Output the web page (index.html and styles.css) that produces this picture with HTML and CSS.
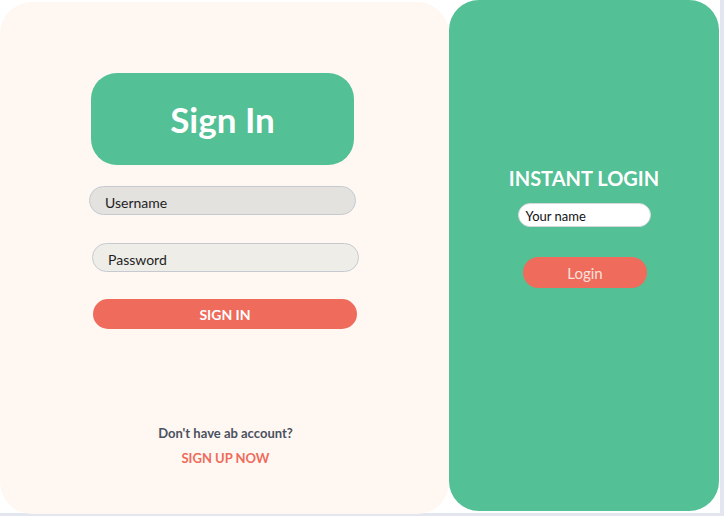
FILE: index.html
```html
<!DOCTYPE html>
<html>
<head>
<meta charset="utf-8">
<link rel="stylesheet" href="styles.css">
</head>
<body>
<div class="page">
  <section class="signin-panel">
    <div class="signin-title">Sign In</div>
    <div class="field field-user">Username</div>
    <div class="field field-pass">Password</div>
    <button class="signin-btn">SIGN IN</button>
    <div class="footer">
      <p class="no-account">Don't have ab account?</p>
      <a class="signup-link">SIGN UP NOW</a>
    </div>
  </section>
  <section class="instant-panel">
    <h2 class="instant-title">INSTANT LOGIN</h2>
    <div class="name-field">Your name</div>
    <button class="login-btn">Login</button>
  </section>
</div>
</body>
</html>
```
FILE: styles.css
```css
html, body {
  margin: 0;
  padding: 0;
}
body {
  background: #e3e6ee;
  font-family: Lato, "Open Sans", sans-serif;
  width: 724px;
  height: 516px;
  overflow: hidden;
}
.page {
  width: 720px;
  height: 513px;
  background: #ffffff;
  display: flex;
  align-items: flex-start;
}
.signin-panel {
  width: 449px;
  height: 512px;
  margin-top: 2px;
  background: #fff8f2;
  border-radius: 32px;
  box-sizing: border-box;
  padding-top: 71px;
  display: flex;
  flex-direction: column;
  align-items: flex-start;
}
.signin-title {
  margin-left: 91px;
  width: 263px;
  height: 92px;
  border-radius: 26px;
  background: #53c095;
  color: #fff;
  font-weight: 700;
  font-size: 35px;
  display: flex;
  align-items: center;
  justify-content: center;
}
.field {
  box-sizing: border-box;
  width: 267px;
  height: 29px;
  border: 1px solid #c6cad0;
  border-radius: 15px;
  font-size: 14px;
  color: #1e1e1e;
  display: flex;
  align-items: center;
  padding-left: 15px;
  padding-top: 3px;
}
.field-user {
  margin-top: 21px;
  margin-left: 89px;
  background: #e3e2df;
}
.field-pass {
  margin-top: 28px;
  margin-left: 92px;
  background: #eeede8;
}
.signin-btn {
  margin-top: 27px;
  margin-left: 93px;
  width: 264px;
  height: 30px;
  border: none;
  border-radius: 15px;
  background: #ef6b5b;
  color: #fff;
  font-family: Lato, sans-serif;
  font-weight: 700;
  font-size: 14px;
  padding: 0;
}
.footer {
  align-self: stretch;
  margin-top: 96px;
  padding-left: 2px;
  display: flex;
  flex-direction: column;
  align-items: center;
  font-weight: 700;
  font-size: 13px;
}
.no-account {
  margin: 0;
  color: #4a5160;
  line-height: 16px;
}
.signup-link {
  margin-top: 9px;
  color: #ef6b5b;
  line-height: 16px;
}
.instant-panel {
  width: 270px;
  height: 511px;
  background: #53c095;
  border-radius: 30px;
  box-sizing: border-box;
  padding-top: 166px;
  display: flex;
  flex-direction: column;
  align-items: center;
}
.instant-title {
  margin: 0;
  color: #fff;
  font-size: 20px;
  font-weight: 700;
  line-height: 24px;
}
.name-field {
  margin-top: 13px;
  box-sizing: border-box;
  width: 133px;
  height: 24px;
  background: #fff;
  border: 1px solid #d4d8dc;
  border-radius: 12px;
  font-size: 13px;
  color: #111;
  display: flex;
  align-items: center;
  padding-left: 7px;
  padding-top: 1px;
}
.login-btn {
  margin-top: 30px;
  margin-left: 2px;
  width: 124px;
  height: 31px;
  border: none;
  border-radius: 16px;
  background: #ef6b5b;
  color: #fbe1dc;
  font-family: Lato, sans-serif;
  font-size: 15px;
  padding: 0;
}
```
